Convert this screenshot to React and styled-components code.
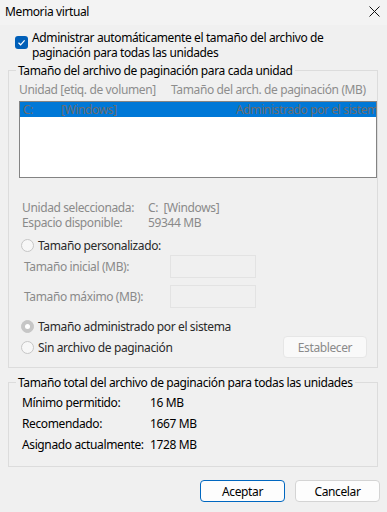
import styled, { createGlobalStyle } from "styled-components";

const Global = createGlobalStyle`
    html, body {
        margin: 0;
        padding: 0;
        background: #f0f0f0;
    }
    * {
        box-sizing: border-box;
    }
`

const Ventana = styled.div`
    width: 387px;
    height: 512px;
    background: #f0f0f0;
    font-family: "Noto Sans", "Liberation Sans", sans-serif;
    font-size: 12px;
    letter-spacing: -0.38px;
    color: #000;
    display: flex;
    flex-direction: column;
    overflow: hidden;
`

const BarraTitulo = styled.div`
    height: 25px;
    background: #f3f3f3;
    display: flex;
    align-items: center;
    justify-content: space-between;
    padding: 0 7px 2px 5px;
`

const Cuerpo = styled.div`
    padding: 0 9px 0 8px;
    display: flex;
    flex-direction: column;
`

const FilaCasilla = styled.label`
    display: flex;
    align-items: flex-start;
    gap: 4px;
    padding-left: 7px;
    margin-top: 5px;
    line-height: 15px;
`

const Casilla = styled.span`
    flex: none;
    width: 13px;
    height: 13px;
    margin-top: 6px;
    border-radius: 3px;
    background: #005fb8;
    display: flex;
    align-items: center;
    justify-content: center;
`

const Grupo = styled.fieldset`
    margin: ${p => p.$arriba}px 0 0 0;
    padding: 0 0 ${p => p.$abajo}px 10px;
    border: 1px solid #dcdcdc;
    min-width: 0;
`

const Leyenda = styled.legend`
    padding: 0 2px;
    margin-left: -3px;
    line-height: 15px;
    color: #000;
    white-space: nowrap;
`

const Encabezados = styled.div`
    display: flex;
    margin-top: 4px;
    line-height: 15px;
    color: #8d8d8d;
    white-space: nowrap;
`

const Columna = styled.span`
    width: ${p => p.$ancho}px;
    flex: none;
`

const Lista = styled.div`
    margin-top: 4px;
    height: 77px;
    border: 1px solid #838383;
    background: #fff;
    padding: 0;
    overflow: hidden;
`

const FilaLista = styled.div`
    display: grid;
    grid-template-columns: 38px 175px 1fr;
    height: 15px;
    line-height: 15px;
    padding-left: 3px;
    background: #0078d7;
    color: #6d6d6d;
    white-space: nowrap;
    overflow: hidden;
`

const Info = styled.div`
    display: grid;
    grid-template-columns: 126px 1fr;
    padding-left: 3px;
    line-height: 15px;
    color: #8a8a8a;
    white-space: nowrap;
    margin-top: ${p => p.$arriba || 0}px;
`

const FilaRadio = styled.label`
    display: flex;
    align-items: center;
    gap: 4px;
    padding-left: 2px;
    height: ${p => p.$alto || 15}px;
    margin-top: ${p => p.$arriba}px;
    color: ${p => p.$oscuro ? "#2a2a2a" : "#8a8a8a"};
    white-space: nowrap;
`

const Radio = styled.span`
    flex: none;
    width: 13px;
    height: 13px;
    border-radius: 50%;
    border: 1px solid #c6c6c6;
    background: ${p => p.$marcado ? "#c6c6c6" : "#f7f7f7"};
    display: flex;
    align-items: center;
    justify-content: center;

    &::after {
        content: "";
        width: 5px;
        height: 5px;
        border-radius: 50%;
        background: ${p => p.$marcado ? "#fff" : "transparent"};
    }
`

const FilaCampo = styled.div`
    display: flex;
    align-items: center;
    padding-left: 5px;
    margin-top: ${p => p.$arriba}px;
    color: #8a8a8a;
    white-space: nowrap;
`

const Etiqueta = styled.span`
    width: 146px;
    flex: none;
`

const Campo = styled.div`
    width: 86px;
    height: 23px;
    border: 1px solid #e3e3e3;
    background: #f0f0f0;
`

const Relleno = styled.span`
    flex: 1;
`

const Boton = styled.button`
    font: inherit;
    letter-spacing: inherit;
    width: ${p => p.$ancho || 85}px;
    height: 22px;
    padding: 0;
    border-radius: 4px;
    border: 1px solid;
    background: ${p => p.$desactivado ? "#f9f9f9" : "#fdfdfd"};
    color: ${p => p.$desactivado ? "#8a8a8a" : "#000"};
    border-color: ${p => p.$desactivado ? "#e6e6e6" : p.$principal ? "#0067c0" : "#d4d4d4"};
`

const FilaTotal = styled.div`
    display: grid;
    grid-template-columns: 128px 1fr;
    padding-left: 3px;
    height: 21px;
    line-height: 21px;
    white-space: nowrap;
    margin-top: ${p => p.$arriba || 0}px;
`

const Pie = styled.div`
    display: flex;
    justify-content: flex-end;
    gap: 10px;
    margin: 13px -2px 0 0;
`

function Cerrar() {
    return (
        <svg width="11" height="11" viewBox="0 0 11 11">
            <path d="M0.5 0.5 L10.5 10.5 M10.5 0.5 L0.5 10.5" stroke="#111" strokeWidth="1" />
        </svg>
    )
}

function Visto() {
    return (
        <svg width="9" height="9" viewBox="0 0 9 9">
            <path d="M1.5 4.8 L3.6 6.8 L7.6 2.4" fill="none" stroke="#fff" strokeWidth="1.2" />
        </svg>
    )
}

export default function App() {
    return (
        <>
            <Global />
            <Ventana>
                <BarraTitulo>
                    <span>Memoria virtual</span>
                    <Cerrar />
                </BarraTitulo>

                <Cuerpo>
                    <FilaCasilla>
                        <Casilla><Visto /></Casilla>
                        <span>Administrar automáticamente el tamaño del archivo de<br />paginación para todas las unidades</span>
                    </FilaCasilla>

                    {/* grupo por unidad */}
                    <Grupo $arriba={3} $abajo={9}>
                        <Leyenda>Tamaño del archivo de paginación para cada unidad</Leyenda>
                        <Encabezados>
                            <Columna $ancho={152}>Unidad [etiq. de volumen]</Columna>
                            <span>Tamaño del arch. de paginación (MB)</span>
                        </Encabezados>
                        <Lista>
                            <FilaLista>
                                <span>C:</span>
                                <span>[Windows]</span>
                                <span>Administrado por el sistema</span>
                            </FilaLista>
                        </Lista>

                        <Info $arriba={22}>
                            <span>Unidad seleccionada:</span>
                            <span>C:&nbsp; [Windows]</span>
                        </Info>
                        <Info>
                            <span>Espacio disponible:</span>
                            <span>59344 MB</span>
                        </Info>

                        <FilaRadio $arriba={8} $oscuro>
                            <Radio />
                            <span>Tamaño personalizado:</span>
                        </FilaRadio>
                        <FilaCampo $arriba={2}>
                            <Etiqueta>Tamaño inicial (MB):</Etiqueta>
                            <Campo />
                        </FilaCampo>
                        <FilaCampo $arriba={7}>
                            <Etiqueta>Tamaño máximo (MB):</Etiqueta>
                            <Campo />
                        </FilaCampo>

                        <FilaRadio $arriba={11} $oscuro>
                            <Radio $marcado />
                            <span>Tamaño administrado por el sistema</span>
                        </FilaRadio>
                        <FilaRadio $arriba={2} $alto={22} $oscuro>
                            <Radio />
                            <span>Sin archivo de paginación</span>
                            <Relleno />
                            <Boton $ancho={84} $desactivado style={{ marginRight: 10 }}>Establecer</Boton>
                        </FilaRadio>
                    </Grupo>

                    {/* totales */}
                    <Grupo $arriba={7} $abajo={11}>
                        <Leyenda>Tamaño total del archivo de paginación para todas las unidades</Leyenda>
                        <FilaTotal $arriba={2}>
                            <span>Mínimo permitido:</span>
                            <span>16 MB</span>
                        </FilaTotal>
                        <FilaTotal>
                            <span>Recomendado:</span>
                            <span>1667 MB</span>
                        </FilaTotal>
                        <FilaTotal>
                            <span>Asignado actualmente:</span>
                            <span>1728 MB</span>
                        </FilaTotal>
                    </Grupo>

                    <Pie>
                        <Boton $principal>Aceptar</Boton>
                        <Boton>Cancelar</Boton>
                    </Pie>
                </Cuerpo>
            </Ventana>
        </>
    )
}
